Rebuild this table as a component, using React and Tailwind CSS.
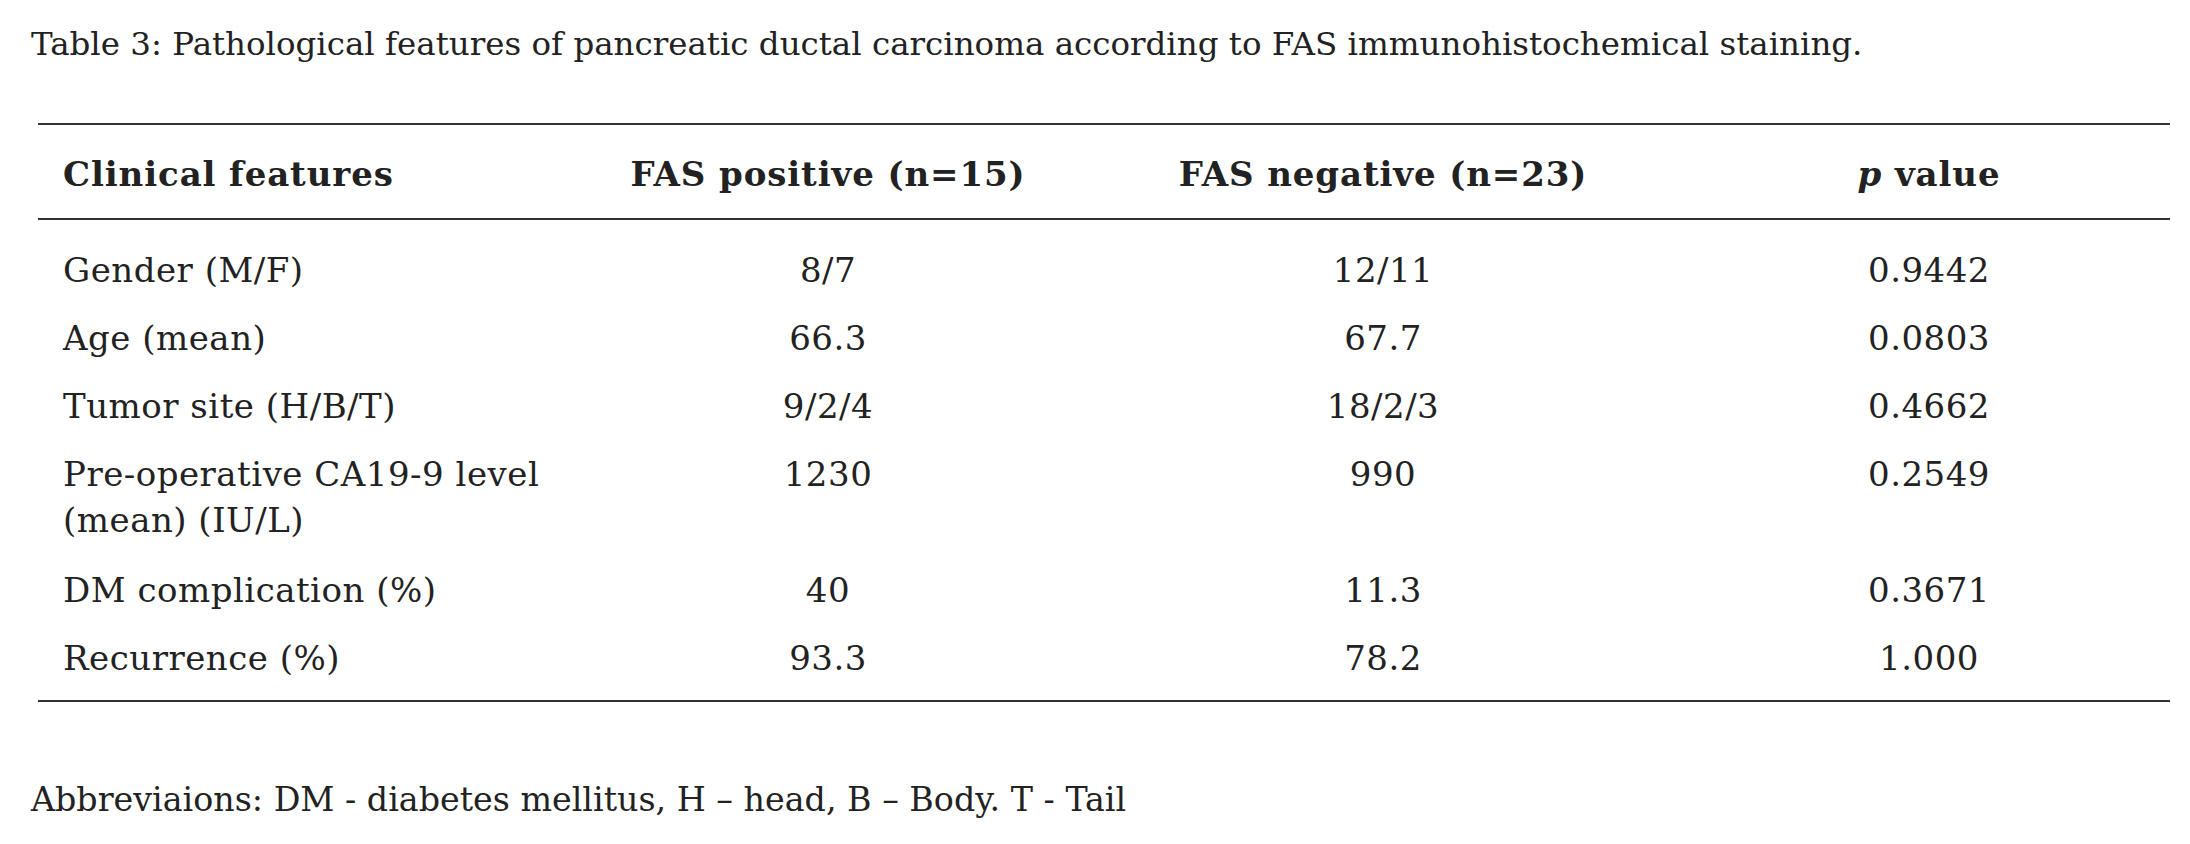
import React from "react";

const rows = [
  { feature: "Gender (M/F)", pos: "8/7", neg: "12/11", p: "0.9442" },
  { feature: "Age (mean)", pos: "66.3", neg: "67.7", p: "0.0803" },
  { feature: "Tumor site (H/B/T)", pos: "9/2/4", neg: "18/2/3", p: "0.4662" },
  {
    feature: (
      <>
        Pre-operative CA19-9 level
        <br />
        (mean) (IU/L)
      </>
    ),
    pos: "1230",
    neg: "990",
    p: "0.2549",
    extra: true,
  },
  { feature: "DM complication (%)", pos: "40", neg: "11.3", p: "0.3671" },
  { feature: "Recurrence (%)", pos: "93.3", neg: "78.2", p: "1.000" },
];

const cols = "grid grid-cols-[540px_500px_610px_482px]";

export default function App() {
  return (
    <div className="min-h-screen bg-white text-[#222] font-['DejaVu_Serif',serif] pl-[31px] pt-[22px]">
      {/* Caption */}
      <p className="text-[32.5px] leading-[44px]">
        Table 3: Pathological features of pancreatic ductal carcinoma according to FAS immunohistochemical staining.
      </p>

      {/* Table */}
      <div className="mt-[57px] ml-[7px] w-[2132px] border-t-2 border-b-2 border-[#333]">
        {/* Header row */}
        <div className={`${cols} h-[95px] pt-[5px] items-center border-b-2 border-[#333] text-[34px] tracking-[0.9px] font-bold`}>
          <div className="pl-[25px]">Clinical features</div>
          <div className="text-center">FAS positive (n=15)</div>
          <div className="text-center">FAS negative (n=23)</div>
          <div className="text-center">
            <i>p</i> value
          </div>
        </div>

        {/* Body rows */}
        <div className="pt-[16px] pb-[8px] text-[34px] tracking-[0.5px] leading-[46px]">
          {rows.map((r, i) => (
            <div key={i} className={`${cols} py-[11px] ${r.extra ? "pb-[13px]" : ""}`}>
              <div className="pl-[25px]">{r.feature}</div>
              <div className="text-center">{r.pos}</div>
              <div className="text-center">{r.neg}</div>
              <div className="text-center">{r.p}</div>
            </div>
          ))}
        </div>
      </div>

      {/* Footnote */}
      <p className="mt-[76px] text-[33.3px] leading-[44px]">
        Abbreviaions: DM - diabetes mellitus, H – head, B – Body. T - Tail
      </p>
    </div>
  );
}
